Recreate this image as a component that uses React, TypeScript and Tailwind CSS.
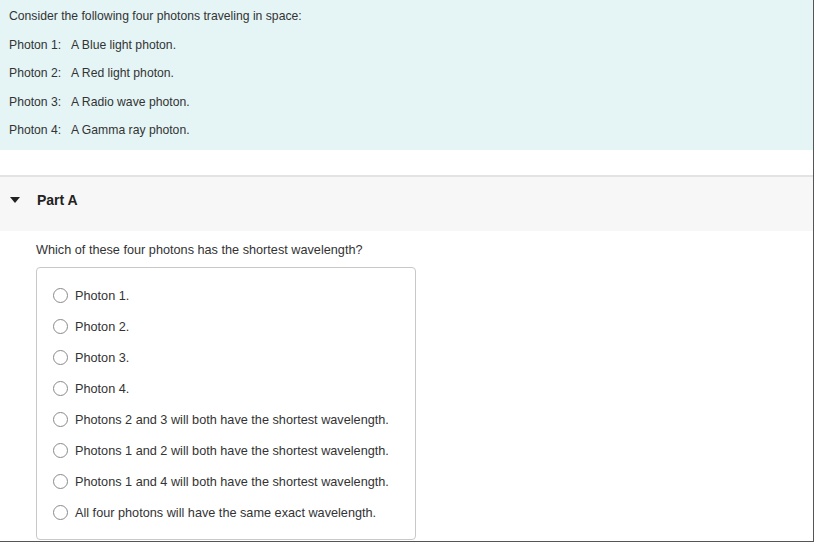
import React from "react";

const PHOTONS = [
  "A Blue light photon.",
  "A Red light photon.",
  "A Radio wave photon.",
  "A Gamma ray photon.",
];

const OPTIONS = [
  "Photon 1.",
  "Photon 2.",
  "Photon 3.",
  "Photon 4.",
  "Photons 2 and 3 will both have the shortest wavelength.",
  "Photons 1 and 2 will both have the shortest wavelength.",
  "Photons 1 and 4 will both have the shortest wavelength.",
  "All four photons will have the same exact wavelength.",
];

const App: React.FC = () => {
  return (
    <div
      className="w-[814px] h-[542px] overflow-hidden bg-white border-r border-b border-[#555] text-[#333]"
      style={{ fontFamily: '"Liberation Sans", Arial, sans-serif' }}
    >
      {/* Intro */}
      <div className="bg-[#e5f5f6] h-[150px] px-[9px] pt-[8px] flex flex-col gap-[12.5px] text-[12.2px]">
        <p className="leading-[16px]">Consider the following four photons traveling in space:</p>
        {PHOTONS.map((p, i) => (
          <p key={i} className="leading-[16px] flex">
            <span className="w-[62px]">Photon {i + 1}:</span>
            <span>{p}</span>
          </p>
        ))}
      </div>

      <div className="h-[25px]" />

      {/* Part header */}
      <div className="border-t-2 border-[#e3e3e3] bg-[#f7f7f7] h-[56px] pt-[15px] flex items-start">
        <div className="flex items-center h-[16px]">
          <svg width="10" height="6" viewBox="0 0 10 6" className="ml-[10px]">
            <path d="M0 0 L10 0 L5 6 Z" fill="#222" />
          </svg>
          <span className="ml-[17px] text-[14px] font-bold text-[#222] leading-[16px]">Part A</span>
        </div>
      </div>

      {/* Question */}
      <div className="pl-[36px] pt-[11px] text-[12.7px]">
        <p className="leading-[16px]">Which of these four photons has the shortest wavelength?</p>
        <div className="mt-[9px] w-[380px] border border-[#c8c8c8] rounded-[4px] pt-[12px] pb-[11px] pl-[16px]">
          {OPTIONS.map((o) => (
            <label key={o} className="flex items-center h-[31px]">
              <span className="w-[15px] h-[15px] rounded-full border-[1.5px] border-[#8a8a8a] bg-white shrink-0" />
              <span className="ml-[7px] leading-[16px]">{o}</span>
            </label>
          ))}
        </div>
      </div>
    </div>
  );
};

export default App;
